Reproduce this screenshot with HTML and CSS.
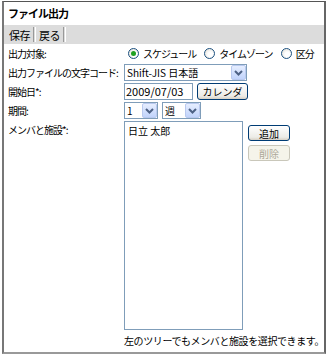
FILE: index.html
```html
<!DOCTYPE html>
<html lang="ja">
<head>
  <meta charset="UTF-8">
  <title>ファイル出力</title>
  <link rel="stylesheet" href="styles.css">
</head>
<body>
  <div class="export">
    <div class="export__title">ファイル出力</div>
    <div class="export__toolbar">
      <span class="export__tool">保存</span>
      <span class="export__sep"></span>
      <span class="export__tool">戻る</span>
      <span class="export__sep"></span>
    </div>
    <div class="export__form">
      <div class="export__label">出力対象:</div>
      <div class="export__field export__radios">
        <span class="radio checked"></span><span class="radio__text">スケジュール</span>
        <span class="radio"></span><span class="radio__text">タイムゾーン</span>
        <span class="radio"></span><span class="radio__text">区分</span>
      </div>

      <div class="export__label">出力ファイルの文字コード:</div>
      <div class="export__field">
        <div class="select select--code">
          <span class="select__value">Shift-JIS 日本語</span>
          <span class="select__arrow"><svg width="9" height="6" viewBox="0 0 9 6"><path d="M1 1l3.5 3.5L8 1" fill="none" stroke="#4d6185" stroke-width="2"/></svg></span>
        </div>
      </div>

      <div class="export__label">開始日*:</div>
      <div class="export__field">
        <div class="input input--date">2009/07/03</div>
        <button class="btn">カレンダ</button>
      </div>

      <div class="export__label">期間:</div>
      <div class="export__field">
        <div class="select select--num">
          <span class="select__value">1</span>
          <span class="select__arrow"><svg width="9" height="6" viewBox="0 0 9 6"><path d="M1 1l3.5 3.5L8 1" fill="none" stroke="#4d6185" stroke-width="2"/></svg></span>
        </div>
        <div class="select select--unit">
          <span class="select__value">週</span>
          <span class="select__arrow"><svg width="9" height="6" viewBox="0 0 9 6"><path d="M1 1l3.5 3.5L8 1" fill="none" stroke="#4d6185" stroke-width="2"/></svg></span>
        </div>
      </div>

      <div class="export__label">メンバと施設*:</div>
      <div class="export__field export__members">
        <div class="members">
          <div class="members__list">日立 太郎</div>
          <div class="members__btns">
            <button class="btn btn--small">追加</button>
            <button class="btn btn--small" disabled>削除</button>
          </div>
        </div>
        <div class="export__note">左のツリーでもメンバと施設を選択できます。</div>
      </div>
    </div>
  </div>
</body>
</html>
```

FILE: styles.css
```css
* {
  box-sizing: border-box;
}
body {
  margin: 0;
  font-family: "Noto Sans CJK JP", "Liberation Sans", sans-serif;
  font-size: 10px;
  color: #000;
  background: #fff;
}
.export {
  margin: 1px 0 0 2px;
  width: 324px;
  height: 353px;
  border: 1px solid #555;
  border-left: 2px solid #777;
  border-bottom: 2px solid #999;
  border-right: 2px solid #666;
  white-space: nowrap;
}
.export__title {
  height: 23px;
  padding: 4px 4px 0;
  font-size: 11px;
  font-weight: bold;
  letter-spacing: -1px;
  line-height: 14px;
}
.export__toolbar {
  height: 19px;
  background: #dcdcdc;
  display: flex;
  align-items: center;
  padding-left: 3px;
  font-size: 11px;
  letter-spacing: -0.5px;
}
.export__tool {
  padding: 0 2px;
}
.export__sep {
  width: 3px;
  height: 15px;
  border-left: 1px solid #999;
  border-right: 1px solid #fff;
  margin: 0 1px;
}
.export__form {
  display: grid;
  grid-template-columns: 116px 1fr;
  row-gap: 2px;
  padding: 1px 0 0 4px;
  letter-spacing: -1px;
}
.export__label {
  height: 17px;
  line-height: 17px;
}
.export__field {
  display: flex;
  align-items: center;
  gap: 4px;
  height: 17px;
}
.export__radios {
  padding-left: 4px;
  gap: 0;
}
.radio {
  flex: none;
  width: 11px;
  height: 11px;
  border-radius: 50%;
  border: 1px solid #1c5180;
  background: radial-gradient(circle at 60% 60%, #fff 30%, #dcd9cf 100%);
  margin-right: 4px;
  position: relative;
}
.radio.checked::after {
  content: "";
  position: absolute;
  left: 2px;
  top: 2px;
  width: 5px;
  height: 5px;
  border-radius: 50%;
  background: #21a121;
}
.radio__text {
  margin-right: 8px;
}
.select {
  display: flex;
  align-items: center;
  height: 17px;
  border: 1px solid #7f9db9;
  background: #fff;
  padding-left: 2px;
}
.select__value {
  flex: 1;
  letter-spacing: 0;
  overflow: hidden;
}
.select__arrow {
  flex: none;
  width: 15px;
  height: 15px;
  display: flex;
  align-items: center;
  justify-content: center;
  border: 1px solid #b9c9ef;
  border-radius: 2px;
  background: linear-gradient(#e6eeff, #c1d3fb);
}
.select--code {
  width: 123px;
}
.select--num {
  width: 34px;
}
.select--unit {
  width: 39px;
}
.input {
  height: 17px;
  border: 1px solid #7f9db9;
  padding-left: 1px;
  line-height: 15px;
  letter-spacing: 0;
  font-size: 11px;
}
.input--date {
  width: 69px;
}
.btn {
  font-family: inherit;
  font-size: 10px;
  letter-spacing: 0;
  height: 17px;
  padding: 0;
  width: 51px;
  border: 1px solid #003c74;
  border-radius: 3px;
  background: linear-gradient(#fff, #ecebe6 80%, #d6d0c5);
  color: #000;
}
.btn--small {
  width: 42px;
  height: 16px;
}
.btn:disabled {
  border-color: #c9c7ba;
  color: #aca899;
  background: #f5f4ea;
}
.export__members {
  flex-direction: column;
  align-items: flex-start;
  height: auto;
  gap: 2px;
}
.members {
  display: flex;
  gap: 5px;
}
.members__list {
  width: 119px;
  height: 209px;
  border: 1px solid #7f9db9;
  padding: 1px 3px;
  letter-spacing: 0;
}
.members__btns {
  display: flex;
  flex-direction: column;
  gap: 4px;
  padding-top: 4px;
}
.export__note {
  padding-top: 1px;
  letter-spacing: -0.4px;
}
```
